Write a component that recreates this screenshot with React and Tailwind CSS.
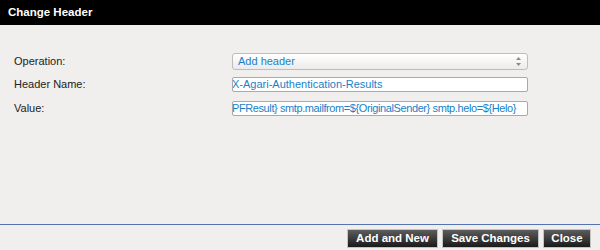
import React from 'react'

const font = { fontFamily: '"Liberation Sans", Arial, sans-serif' }

const Button = ({ children, className = '' }) => (
  <button
    className={`h-[19px] whitespace-nowrap border border-[#c4c4c4] bg-gradient-to-b from-[#5c5c5c] via-[#3c3c3c] to-[#1a1a1a] px-0 text-[11.5px] font-bold leading-none text-white ${className}`}
  >
    {children}
  </button>
)

const App = () => {
  return (
    <div className="flex h-[250px] w-[600px] flex-col bg-[#f0efed]" style={font}>
      {/* Title bar */}
      <div className="flex h-[25px] items-center bg-black pl-[8px] text-[11.5px] font-bold text-white">
        Change Header
      </div>

      {/* Form */}
      <div className="flex flex-1 flex-col pl-[14px] pt-[28px] text-[11px] text-[#222]">
        <div className="flex h-[17px] items-center">
          <div className="w-[218px]">Operation:</div>
          <div className="flex h-[17px] w-[296px] items-center justify-between rounded-[3px] border border-[#bdbdbd] bg-gradient-to-b from-white to-[#ebebeb] pl-[5px] pr-[5px] text-[#1a7fc7]">
            <span>Add header</span>
            <svg width="7" height="11" viewBox="0 0 7 11">
              <path d="M3.5 1 L6 4 L1 4 Z" fill="#8a8a8a" />
              <path d="M3.5 10 L6 7 L1 7 Z" fill="#8a8a8a" />
            </svg>
          </div>
        </div>
        <div className="mt-[7px] flex h-[15px] items-center">
          <div className="w-[218px]">Header Name:</div>
          <div className="flex h-[15px] w-[296px] items-center overflow-hidden whitespace-nowrap rounded-[2px] border border-[#a9a9a9] bg-white text-[#1a7fc7]">
            <span className="ml-[-1px]">X-Agari-Authentication-Results</span>
          </div>
        </div>
        <div className="mt-[9px] flex h-[15px] items-center">
          <div className="w-[218px]">Value:</div>
          <div className="flex h-[15px] w-[296px] items-center overflow-hidden whitespace-nowrap rounded-[2px] border border-[#a9a9a9] bg-white text-[#1a7fc7]">
            <span className="ml-[-1px] tracking-[-0.4px]">{'PFResult} smtp.mailfrom=${OriginalSender} smtp.helo=${Helo}'}</span>
          </div>
        </div>
      </div>

      {/* Footer */}
      <div className="flex h-[26px] items-start justify-end gap-[4px] border-t border-[#5473b0] pr-[9px] pt-[4px]">
        <Button className="w-[91px]">Add and New</Button>
        <Button className="w-[97px]">Save Changes</Button>
        <Button className="w-[48px]">Close</Button>
      </div>
    </div>
  )
}

export default App
